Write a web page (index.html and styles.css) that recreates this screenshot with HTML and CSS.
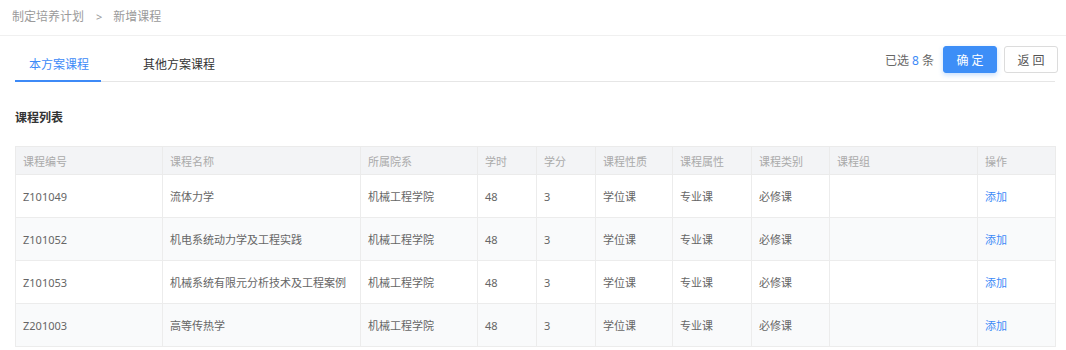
FILE: index.html
```html
<html>

<head>
    <title>新增课程</title>
    <link rel="stylesheet" href="styles.css">
</head>

<body>
    <div class="crumb">
        <span>制定培养计划</span>
        <span class="sep">&gt;</span>
        <span>新增课程</span>
    </div>
    <div class="main">
        <div class="tabbar">
            <div class="tabs">
                <div class="tab active">本方案课程</div>
                <div class="tab">其他方案课程</div>
            </div>
            <div class="actions">
                <span class="count">已选 <b>8</b> 条</span>
                <button class="btn primary">确定</button>
                <button class="btn">返回</button>
            </div>
        </div>
        <h3 class="title">课程列表</h3>
        <table class="grid">
            <colgroup>
                <col style="width:147px"><col style="width:198px"><col style="width:117px">
                <col style="width:59px"><col style="width:59px"><col style="width:77px">
                <col style="width:79px"><col style="width:78px"><col style="width:148px">
                <col>
            </colgroup>
            <thead>
                <tr>
                    <th>课程编号</th><th>课程名称</th><th>所属院系</th><th>学时</th><th>学分</th>
                    <th>课程性质</th><th>课程属性</th><th>课程类别</th><th>课程组</th><th>操作</th>
                </tr>
            </thead>
            <tbody>
                <tr>
                    <td>Z101049</td><td>流体力学</td><td>机械工程学院</td><td>48</td><td>3</td>
                    <td>学位课</td><td>专业课</td><td>必修课</td><td></td><td><a>添加</a></td>
                </tr>
                <tr>
                    <td>Z101052</td><td>机电系统动力学及工程实践</td><td>机械工程学院</td><td>48</td><td>3</td>
                    <td>学位课</td><td>专业课</td><td>必修课</td><td></td><td><a>添加</a></td>
                </tr>
                <tr>
                    <td>Z101053</td><td>机械系统有限元分析技术及工程案例</td><td>机械工程学院</td><td>48</td><td>3</td>
                    <td>学位课</td><td>专业课</td><td>必修课</td><td></td><td><a>添加</a></td>
                </tr>
                <tr>
                    <td>Z201003</td><td>高等传热学</td><td>机械工程学院</td><td>48</td><td>3</td>
                    <td>学位课</td><td>专业课</td><td>必修课</td><td></td><td><a>添加</a></td>
                </tr>
            </tbody>
        </table>
    </div>
</body>

</html>
```

FILE: styles.css
```css
body {
    margin: 0;
    background: #fff;
    font-family: "Noto Sans", "Noto Sans CJK SC", sans-serif;
    color: #666;
}

.crumb {
    height: 36px;
    padding-left: 12px;
    display: flex;
    align-items: center;
    font-size: 12px;
    color: #9a9a9a;
    border-bottom: 1px solid #f0f0f0;
    box-sizing: border-box;
    padding-bottom: 3px;
}

.crumb .sep {
    margin: 0 11px 0 12px;
    font-size: 11px;
}

.main {
    padding: 0 10px 0 15px;
}

.tabbar {
    display: flex;
    justify-content: space-between;
    align-items: flex-end;
    height: 46px;
}

.tabs {
    display: flex;
    flex: 1;
    border-bottom: 1px solid #e6e6e6;
    margin-right: 1px;
}

.tab {
    font-size: 12px;
    color: #333;
    height: 28px;
    line-height: 22px;
    box-sizing: border-box;
    padding: 0 14px;
    margin-right: 28px;
    margin-bottom: -1px;
    white-space: nowrap;
}

.tab.active {
    color: #3d8af7;
    border-bottom: 2px solid #3d8af7;
    padding: 0 12px 0 14px;
}

.actions {
    display: flex;
    align-items: center;
    position: relative;
    top: -9px;
    left: 2px;
    width: 0;
    justify-content: flex-end;
    white-space: nowrap;
}

.count {
    font-size: 12px;
    color: #666;
    margin-right: 9px;
}

.count b {
    font-weight: normal;
    color: #3d8af7;
}

.btn {
    font-family: inherit;
    font-size: 12px;
    letter-spacing: 3px;
    padding: 0 0 0 3px;
    width: 54px;
    height: 27px;
    border: 1px solid #dcdcdc;
    background: #fff;
    color: #555;
    border-radius: 3px;
    margin-left: 7px;
    flex-shrink: 0;
}

.btn.primary {
    background: #3d8ef7;
    border-color: #3d8ef7;
    color: #fff;
    box-shadow: 0 2px 5px rgba(61, 142, 247, 0.3);
    margin-left: 0;
}

.title {
    font-size: 12px;
    font-weight: bold;
    color: #333;
    margin: 26px 0 18px 0;
    line-height: 20px;
}

.grid {
    width: 1041px;
    border-collapse: collapse;
    table-layout: fixed;
    font-size: 11px;
}

.grid th {
    height: 28px;
    text-align: left;
    font-weight: normal;
    color: #aaa;
    background: #f3f4f6;
    border: 1px solid #ebebeb;
    padding: 0 7px;
}

.grid td {
    height: 43px;
    padding: 0 7px;
    border: 1px solid #ececec;
    color: #666;
    white-space: nowrap;
    overflow: hidden;
}

.grid tbody tr:nth-child(even) td {
    background: #f9fafb;
}

.grid td a {
    color: #3d8af7;
}
```
